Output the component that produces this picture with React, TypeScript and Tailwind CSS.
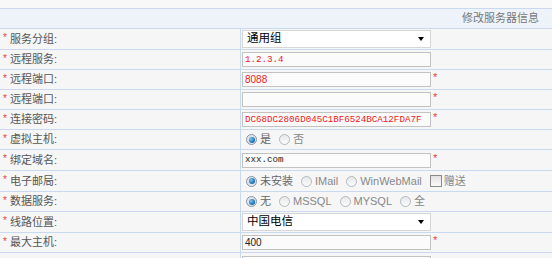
import React from "react";

const FONT = "font-['Liberation_Sans','Noto_Sans_CJK_SC',sans-serif]";
const MONO = "font-['Liberation_Mono','Noto_Sans_CJK_SC',monospace]";

const Star = () => <span className="text-[#e84040] text-[11px] leading-none -mt-[4px]">*</span>;

const Radio = ({ on }: { on?: boolean }) =>
  on ? (
    <span className="w-[11px] h-[11px] rounded-full border border-[#8c96a0] bg-[#dfe5ea] flex items-center justify-center shrink-0">
      <span className="w-[6px] h-[6px] rounded-full bg-[radial-gradient(circle_at_35%_35%,#7fc2f0,#1468b0_70%)]" />
    </span>
  ) : (
    <span className="w-[11px] h-[11px] rounded-full border border-[#b4b8bc] bg-[linear-gradient(#e6e8ea,#fbfbfb)] shrink-0" />
  );

const Opt = ({ on, label }: { on?: boolean; label: string }) => (
  <span className="flex items-center gap-[3px] mr-[8px]">
    <Radio on={on} />
    <span className={on ? "text-[#666]" : "text-[#888]"}>{label}</span>
  </span>
);

const TextBox = ({ children, cls = "" }: { children?: React.ReactNode; cls?: string }) => (
  <div className={`w-[189px] h-[15px] border border-[#c2c2c2] bg-[#fbfbfb] pl-[2px] flex items-center overflow-hidden whitespace-nowrap ${cls}`}>
    {children}
  </div>
);

const SelectBox = ({ text }: { text: string }) => (
  <div className="w-[189px] h-[18px] border border-[#d6d6d6] bg-white flex items-center justify-between pl-[4px] pr-[4px]">
    <span className="text-black text-[11.5px]">{text}</span>
    <span className="w-0 h-0 border-l-[3px] border-r-[3px] border-t-[4px] border-l-transparent border-r-transparent border-t-black mr-[2px]" />
  </div>
);

const rows: { label: string; h: string; content: React.ReactNode }[] = [
  { label: "服务分组:", h: "h-[21px]", content: <SelectBox text="通用组" /> },
  {
    label: "远程服务:",
    h: "h-[20px]",
    content: <TextBox cls={`${MONO} text-[9.2px] text-[#f01818]`}>1.2.3.4</TextBox>,
  },
  {
    label: "远程端口:",
    h: "h-[20px]",
    content: (
      <>
        <TextBox cls="text-[10px] text-[#f01818]">8088</TextBox>
        <Star />
      </>
    ),
  },
  {
    label: "远程端口:",
    h: "h-[20px]",
    content: (
      <>
        <TextBox />
        <Star />
      </>
    ),
  },
  {
    label: "连接密码:",
    h: "h-[20px]",
    content: (
      <>
        <TextBox cls={`${MONO} text-[9.2px] text-[#f01818]`}>DC68DC2806D045C1BF6524BCA12FDA7F</TextBox>
        <Star />
      </>
    ),
  },
  {
    label: "虚拟主机:",
    h: "h-[20px]",
    content: (
      <div className="flex items-center pl-[4px] text-[11px]">
        <Opt on label="是" />
        <Opt label="否" />
      </div>
    ),
  },
  {
    label: "绑定域名:",
    h: "h-[21px]",
    content: (
      <>
        <TextBox cls={`${MONO} text-[9.2px] text-[#222]`}>xxx.com</TextBox>
        <Star />
      </>
    ),
  },
  {
    label: "电子邮局:",
    h: "h-[21px]",
    content: (
      <div className="flex items-center pl-[4px] text-[11px]">
        <Opt on label="未安装" />
        <Opt label="IMail" />
        <Opt label="WinWebMail" />
        <span className="flex items-center gap-[2px]">
          <span className="w-[12px] h-[12px] border border-[#8a8a8a] bg-[linear-gradient(#e2e2e2,#fafafa)]" />
          <span className="text-[#888]">赠送</span>
        </span>
      </div>
    ),
  },
  {
    label: "数据服务:",
    h: "h-[20px]",
    content: (
      <div className="flex items-center pl-[4px] text-[11px]">
        <Opt on label="无" />
        <Opt label="MSSQL" />
        <Opt label="MYSQL" />
        <Opt label="全" />
      </div>
    ),
  },
  { label: "线路位置:", h: "h-[21px]", content: <SelectBox text="中国电信" /> },
  {
    label: "最大主机:",
    h: "h-[20px]",
    content: (
      <>
        <TextBox cls="text-[10px] text-[#222]">400</TextBox>
        <Star />
      </>
    ),
  },
];

export default function App() {
  return (
    <div className={`w-[552px] h-[258px] overflow-hidden bg-[#f6f6f6] ${FONT} text-[11px]`}>
      <div className="h-[9px] border-b border-[#c9d9ef] bg-[#f8f8f8]" />
      <div className="h-[20px] border-b border-[#c9d9ef] bg-[#eef3f9] flex items-center justify-end pr-[13px] text-[#777] text-[11px]">
        修改服务器信息
      </div>
      {rows.map((r, i) => (
        <div key={i} className={`flex border-b border-[#c9d9ef] ${r.h}`}>
          <div className="w-[241px] border-r border-[#c9d9ef] flex items-center pl-[3px] text-[#555]">
            <span className="text-[#e84040] text-[10px] w-[7px] -mt-[3px]">*</span>
            <span>{r.label}</span>
          </div>
          <div className="flex-1 flex items-center pl-[1px] gap-[2px]">{r.content}</div>
        </div>
      ))}
      <div className="flex h-[20px]">
        <div className="w-[241px] border-r border-[#c9d9ef]" />
        <div className="flex-1 pl-[1px] pt-[3px]">
          <div className="w-[189px] h-[15px] border border-[#c2c2c2] bg-[#fbfbfb]" />
        </div>
      </div>
    </div>
  );
}
